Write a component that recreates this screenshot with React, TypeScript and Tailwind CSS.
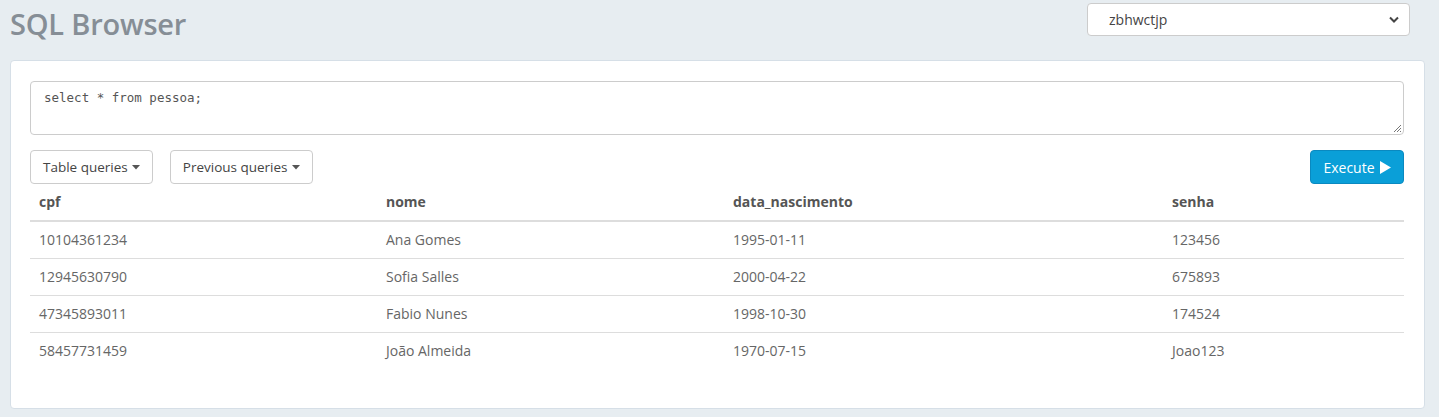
import React from "react";

const rows = [
  ["10104361234", "Ana Gomes", "1995-01-11", "123456"],
  ["12945630790", "Sofia Salles", "2000-04-22", "675893"],
  ["47345893011", "Fabio Nunes", "1998-10-30", "174524"],
  ["58457731459", "João Almeida", "1970-07-15", "Joao123"],
];

function Caret() {
  return (
    <svg width="8" height="5" viewBox="0 0 8 5" className="ml-1 inline-block">
      <path d="M0 0 L8 0 L4 4.5 Z" fill="#555" />
    </svg>
  );
}

export default function App() {
  return (
    <div
      className="w-[1439px] h-[417px] bg-[#e7edf1] text-[#555] overflow-hidden"
      style={{ fontFamily: '"Open Sans", "Noto Sans", sans-serif' }}
    >
      <div className="flex items-start justify-between pl-[10px] pr-[29px] pt-[3px] h-[58px]">
        <h1 className="text-[29px] font-semibold text-[#868e96] leading-[42px] tracking-[-0.2px]">
          SQL Browser
        </h1>
        <div className="w-[323px] h-[33px] bg-white border border-[#ccc] rounded-[4px] flex items-center justify-between pl-[21px] pr-[10px] text-[14px] text-[#444]">
          <span>zbhwctjp</span>
          <svg width="10" height="7" viewBox="0 0 10 7">
            <path d="M1 1.5 L5 5.5 L9 1.5" stroke="#444" strokeWidth="2" fill="none" />
          </svg>
        </div>
      </div>
      <div className="ml-[10px] w-[1415px] mt-[2px] bg-white border border-[#d6dfe7] rounded-[4px] pl-[19px] pr-[20px] pt-[20px] h-[349px]">
        <div className="relative h-[54px] border border-[#ccc] rounded-[4px] px-[13px] pt-[7px] text-[12.5px] text-[#555]"
          style={{ fontFamily: '"DejaVu Sans Mono", monospace' }}>
          select * from pessoa;
          <svg width="9" height="9" viewBox="0 0 9 9" className="absolute right-[1px] bottom-[1px]">
            <path d="M8 1 L1 8 M8 4 L4 8 M8 7 L7 8" stroke="#777" strokeWidth="1" />
          </svg>
        </div>
        <div className="flex items-center mt-[15px] h-[34px]">
          <button className="h-[34px] px-[12px] border border-[#ccc] rounded-[4px] text-[13.5px] text-[#444] bg-white flex items-center">
            Table queries <Caret />
          </button>
          <button className="ml-[17px] h-[34px] px-[12px] border border-[#ccc] rounded-[4px] text-[13.5px] text-[#444] bg-white flex items-center">
            Previous queries <Caret />
          </button>
          <button className="ml-auto h-[34px] w-[94px] rounded-[4px] bg-[#0a9fd8] border border-[#0a89c0] text-white text-[14px] flex items-center justify-center">
            Execute
            <svg width="11" height="13" viewBox="0 0 11 13" className="ml-[5px]">
              <path d="M0 0 L11 6.5 L0 13 Z" fill="white" />
            </svg>
          </button>
        </div>
        <table className="w-full mt-[2px] text-[14px] border-collapse">
          <thead>
            <tr className="border-b-2 border-[#ddd] h-[35px]">
              <th className="w-[347px] text-left font-bold pl-[9px] pb-[4px]">cpf</th>
              <th className="w-[347px] text-left font-bold pl-[9px] pb-[4px]">nome</th>
              <th className="w-[439px] text-left font-bold pl-[9px] pb-[4px]">data_nascimento</th>
              <th className="text-left font-bold pl-[9px] pb-[4px]">senha</th>
            </tr>
          </thead>
          <tbody>
            {rows.map((r, i) => (
              <tr key={i} className={`h-[37px] ${i < rows.length - 1 ? "border-b border-[#ddd]" : ""}`}>
                {r.map((c, j) => (
                  <td key={j} className="pl-[9px] text-[#666]">{c}</td>
                ))}
              </tr>
            ))}
          </tbody>
        </table>
      </div>
    </div>
  );
}
